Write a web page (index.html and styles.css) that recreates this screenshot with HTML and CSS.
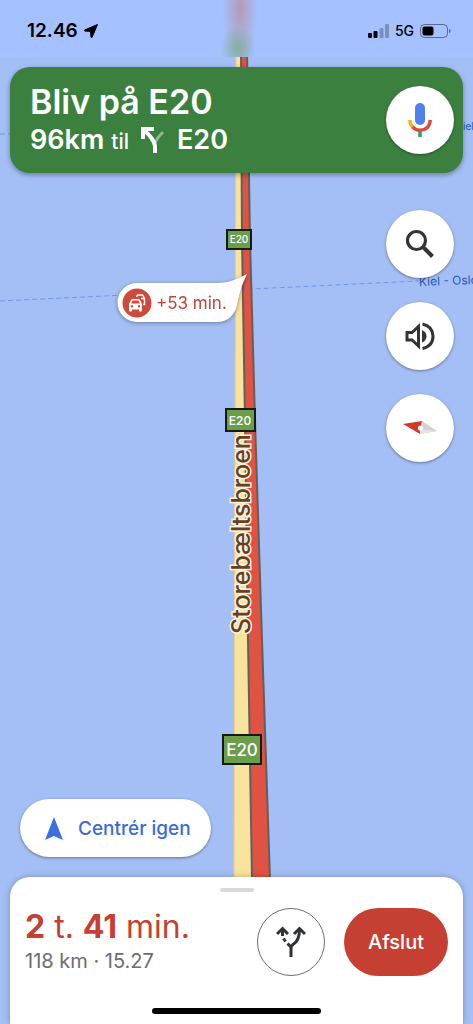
FILE: index.html
```html
<!DOCTYPE html>
<html lang="da">
<head>
    <meta charset="UTF-8">
    <meta name="viewport" content="width=device-width, initial-scale=1.0">
    <title>Navigation - E20</title>
    <link rel="stylesheet" href="styles.css">
</head>
<body>
    <svg class="map" viewBox="0 0 473 1024" preserveAspectRatio="xMidYMin slice" aria-label="Kort">
        <!-- ferry routes -->
        <path class="ferry" d="M0 301 L419 281"/>
        <path class="ferry" d="M0 134 L12 134"/>
        <text class="ferry-label" x="419" y="286" transform="rotate(-2 419 286)">Kiel - Oslo</text>
        <text class="ferry-label small" x="463" y="130">iel</text>

        <!-- bridge -->
        <path fill="#f8e39c" stroke="#e8cf8c" d="M236 50 L242 50 L252 880 L234 880 Z"/>
        <path fill="#e05241" stroke="#62605f" stroke-width="2" d="M241 50 L247 50 L250 240 L255 420 L262 640 L270 880 L252 880 L248 640 L245 420 L242 240 Z"/>
        <text class="road-name" transform="translate(250 634) rotate(-90)">Storebæltsbroen</text>

        <!-- road signs -->
        <g class="sign">
            <rect x="227" y="230" width="24" height="19"/>
            <text x="239" y="243" font-size="10">E20</text>
            <rect x="226" y="409" width="29" height="22"/>
            <text x="240" y="425" font-size="12">E20</text>
            <rect x="223" y="735" width="38" height="29"/>
            <text x="242" y="756" font-size="17">E20</text>
        </g>

        <!-- delay callout -->
        <g class="callout">
            <path d="M137 283 H218 Q231 283 247 274 Q241 286 238 300 Q235 322 216 322 H137 A19.500 19.500 0 0 1 137 283 Z"/>
            <circle cx="137" cy="303" r="14.500" fill="#d04a3c"/>
            <g transform="translate(128 293)">
                <path class="car" fill-rule="evenodd" d="M3 7 Q3.500 6 4.500 6 H10.500 Q11.500 6 12 7 L14 11 V17.500 Q14 18.500 13 18.500 H12 Q11 18.500 11 17.500 V16.500 H4 V17.500 Q4 18.500 3 18.500 H2 Q1 18.500 1 17.500 V11 Z M4.500 7.500 L3.200 10.500 H11.800 L10.500 7.500 Z M4 12 A1.200 1.200 0 1 0 4 14.400 A1.200 1.200 0 1 0 4 12 Z M11 12 A1.200 1.200 0 1 0 11 14.400 A1.200 1.200 0 1 0 11 12 Z"/>
                <path fill="none" stroke="#fff" stroke-width="1.400" d="M8.500 4 L9.500 2 H14.500 L16.500 5.500 V11.500 H15 M13 5.500 H16"/>
            </g>
            <text x="156" y="309">+53 min.</text>
        </g>
    </svg>

    <div class="screen">
        <header class="status-bar">
            <span class="clock">12.46
                <svg width="14" height="14" viewBox="0 0 14 14"><path d="M13.500 0.500 L8 13.500 Q7.400 14 7 13.300 L6.500 7.500 L0.700 7 Q0 6.500 0.600 6 Z" stroke="#000"/></svg>
            </span>
            <span class="signal">
                <svg width="21" height="14" viewBox="0 0 21 14">
                    <rect x="0" y="9" width="4" height="5" rx="1"/>
                    <rect x="5.500" y="7" width="4" height="7" rx="1"/>
                    <rect x="11.500" y="4" width="4" height="10" rx="1" opacity=".25"/>
                    <rect x="17" y="0" width="4" height="14" rx="1" opacity=".25"/>
                </svg>
                5G
                <svg width="31" height="14" viewBox="0 0 31 14">
                    <rect x=".5" y=".5" width="27" height="13" rx="4" fill="none" stroke="#000" opacity=".45"/>
                    <rect x="2.500" y="2.500" width="11" height="9" rx="2"/>
                    <path d="M29 5 Q30.500 5 30.500 7 Q30.500 9 29 9 Z" opacity=".45"/>
                </svg>
            </span>
        </header>

        <section class="direction">
            <div class="direction-text">
                <h1>Bliv på E20</h1>
                <p>96km <small>til</small>
                    <svg width="24" height="26" viewBox="0 0 24 26" fill="none" stroke="#fff" stroke-width="4">
                        <path d="M13 18 Q15 12 22 5" stroke="#8fb891" stroke-width="3"/>
                        <path d="M14 26 V19 Q13 12 3 3"/>
                        <path d="M2 12 V2 H13"/>
                    </svg>
                    E20</p>
            </div>
            <button class="round-button" type="button" aria-label="Stemmesøgning">
                <svg width="24" height="36" viewBox="0 0 24 36" fill="none">
                    <rect x="7" y="1" width="10" height="22" rx="5" fill="#4f80ee"/>
                    <path d="M12 28 V35" stroke="#34a05a" stroke-width="3.500"/>
                    <path d="M1.800 18 Q2 22.500 5 25.300" stroke="#f0b12f" stroke-width="3.500"/>
                    <path d="M4.500 24.800 Q7.500 28.200 12 28.200 Q21.500 28 22.200 18" stroke="#dc4b3e" stroke-width="3.500"/>
                </svg>
            </button>
        </section>

        <nav class="map-controls">
            <button class="round-button" type="button" aria-label="Søg">
                <svg width="30" height="30" viewBox="0 0 30 30" fill="none" stroke="#333436">
                    <circle cx="11.500" cy="11.500" r="9" stroke-width="3.200"/>
                    <path d="M18 18 L27.500 27.500" stroke-width="4"/>
                </svg>
            </button>
            <button class="round-button" type="button" aria-label="Lyd">
                <svg width="30" height="30" viewBox="0 0 30 30" fill="none" stroke="#333436" stroke-width="3">
                    <path d="M2 11.500 H7 L13.500 5.500 V25 L7 19 H2 Z"/>
                    <path d="M17 9 Q21.500 11 21.500 15.200 Q21.500 19.500 17 21.500 Z" fill="#333436" stroke="none"/>
                    <path d="M17.500 3 Q28 5.500 28 15.200 Q28 25 17.500 27.500"/>
                </svg>
            </button>
            <button class="round-button" type="button" aria-label="Kompas">
                <svg width="34" height="16" viewBox="0 0 34 16">
                    <path d="M0 4 L19 1 L17 14 Z" fill="#cf3a2b"/>
                    <path d="M19 1 L34 11 L17 14 Z" fill="#d0d0d0"/>
                    <path d="M17 9 L34 11 L17 14 Z" fill="#e2e2e2"/>
                    <circle cx="17.500" cy="8" r="2.600" fill="#fff"/>
                </svg>
            </button>
        </nav>

        <button class="recenter" type="button">
            <svg width="18" height="23" viewBox="0 0 18 23"><path d="M9 0 L18 23 L9 19 L0 23 Z" fill="#3a70df"/></svg>
            Centrér igen
        </button>

        <footer class="trip-sheet">
            <div class="handle"></div>
            <div class="trip-row">
                <div class="trip-info">
                    <p class="duration"><b>2</b> t. <b>41</b> min.</p>
                    <p class="distance">118 km · 15.27</p>
                </div>
                <button class="routes-button" type="button" aria-label="Alternative ruter">
                    <svg width="30" height="32" viewBox="0 0 30 32" fill="none" stroke="#303336" stroke-width="3">
                        <path d="M15 31 V22 Q15 20 17 18.500 Q23.500 14.500 23.500 4"/>
                        <path d="M18 8 L23.500 2.500 L29 8"/>
                        <path d="M1 8 L6.500 2.500 L12 8"/>
                        <path d="M6.500 4 V10 M7.500 12.500 L9.500 15.500 M11.500 17.500 L15 21"/>
                    </svg>
                </button>
                <button class="end-button" type="button">Afslut</button>
            </div>
            <div class="home-bar"></div>
        </footer>
    </div>
</body>
</html>
```
FILE: styles.css
```css
* {
    box-sizing: border-box;
}
body {
    margin: 0;
    font-family: Inter, "Liberation Sans", sans-serif;
    background-color: #a4bff5;
}
h1, p {
    margin: 0;
}
button {
    padding: 0;
    border: none;
    font-family: inherit;
    cursor: pointer;
}

/* map */
.map {
    position: absolute;
    top: 0;
    left: 0;
    width: 100%;
    height: 100%;
}
.ferry {
    stroke: #7197e6;
    stroke-width: 1;
    stroke-dasharray: 5 3;
}
.ferry-label {
    font-size: 12px;
    fill: #2757ba;
}
.ferry-label.small {
    font-size: 10px;
}
.road-name {
    font-size: 25px;
    font-weight: 500;
    fill: #65411f;
    stroke: #fff3df;
    stroke-width: 3px;
    paint-order: stroke;
}
.sign rect {
    fill: #6b9e4b;
    stroke: #151b12;
    stroke-width: 2px;
}
.sign text {
    fill: #fff;
    font-weight: 500;
    text-anchor: middle;
}
.callout {
    filter: drop-shadow(0 1px 2px rgba(0, 0, 0, 0.35));
    fill: #fff;
}
.callout text {
    font-size: 17px;
    fill: #c34336;
}

/* layout over the map */
.screen {
    position: relative;
    display: flex;
    flex-direction: column;
    min-height: 100vh;
}
.status-bar {
    display: flex;
    justify-content: space-between;
    align-items: center;
    height: 57px;
    padding: 4px 22px 0 27px;
    background: radial-gradient(ellipse 18px 22px at 238px 48px, #86ad9c, transparent), radial-gradient(ellipse 18px 56px at 240px 8px, #b49bb5, transparent), #a5c1ff;
}
.clock, .signal {
    display: flex;
    align-items: center;
    gap: 6px;
}
.clock {
    font-size: 19px;
    font-weight: 600;
}
.signal {
    font-size: 14px;
    font-weight: 500;
}
.direction {
    display: flex;
    justify-content: space-between;
    align-items: center;
    margin: 10px 10px 0;
    padding: 15px 9px 15px 20px;
    border-radius: 20px;
    background-color: #3c8040;
    color: #fff;
    box-shadow: 0 2px 5px rgba(0, 0, 0, 0.35);
}
.direction h1 {
    font-size: 34px;
    font-weight: 600;
    line-height: 40px;
}
.direction p {
    display: flex;
    align-items: center;
    gap: 7px;
    font-size: 27px;
    font-weight: 600;
    line-height: 36px;
}
.direction small {
    padding-top: 4px;
    font-size: 21px;
    font-weight: 500;
    line-height: 32px;
}
.direction p svg {
    margin: 0 5px;
}
.round-button {
    display: flex;
    justify-content: center;
    align-items: center;
    width: 68px;
    height: 68px;
    border-radius: 50%;
    background-color: #fff;
    box-shadow: 0 1px 3px rgba(0, 0, 0, 0.4);
}
.map-controls {
    display: flex;
    flex-direction: column;
    gap: 24px;
    align-self: flex-end;
    margin: 37px 19px auto 0;
}
.recenter {
    display: flex;
    align-items: center;
    align-self: flex-start;
    gap: 15px;
    height: 58px;
    margin: 0 0 20px 20px;
    padding: 0 20px 0 25px;
    border-radius: 29px;
    background-color: #fff;
    color: #3a6cd4;
    font-size: 19px;
    font-weight: 500;
    box-shadow: 0 1px 3px rgba(0, 0, 0, 0.4);
}

/* bottom sheet */
.trip-sheet {
    margin: 0 10px;
    padding: 11px 15px 10px;
    border-radius: 20px 20px 0 0;
    background-color: #fff;
    box-shadow: 0 0 6px rgba(0, 0, 0, 0.25);
}
.handle {
    width: 34px;
    height: 4px;
    margin: 0 auto;
    border-radius: 2px;
    background-color: #d8d9dc;
}
.trip-row {
    display: flex;
    align-items: center;
    gap: 19px;
    margin-top: 16px;
}
.trip-info {
    flex: 1;
}
.duration {
    color: #c54033;
    font-size: 32px;
    line-height: 38px;
}
.distance {
    color: #6b6d70;
    font-size: 20px;
    line-height: 30px;
}
.routes-button {
    display: flex;
    justify-content: center;
    align-items: center;
    width: 68px;
    height: 68px;
    border: 1px solid #6b6d70;
    border-radius: 50%;
    background-color: #fff;
}
.end-button {
    width: 104px;
    height: 68px;
    border-radius: 34px;
    background-color: #c54033;
    color: #fff;
    font-size: 20px;
    font-weight: 500;
}
.home-bar {
    width: 169px;
    height: 6px;
    margin: 32px auto 0;
    border-radius: 3px;
    background-color: #000;
}
```
